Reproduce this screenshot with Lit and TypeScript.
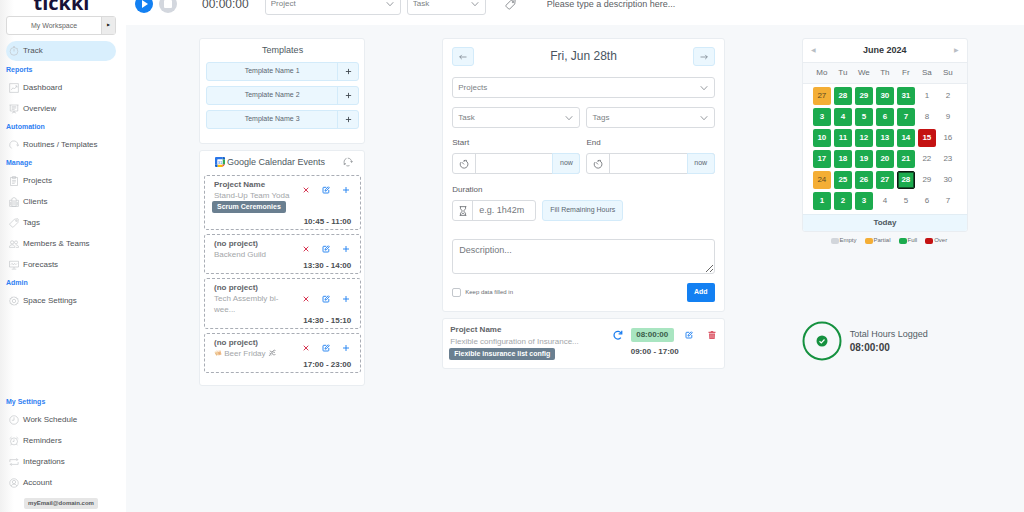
import { LitElement, html, svg, css } from "lit";
import { customElement } from "lit/decorators.js";
import { classMap } from "lit/directives/class-map.js";

/* Line icons on a 16-unit grid, drawn with currentColor. */
const shapes = {
  stopwatch: svg`<circle cx="8" cy="8.6" r="6.2"/><path d="M8 4.8v4M6.4 1.2h3.2M8 1.2v1.2M12.6 3.2l1 1"/>`,
  chart: svg`<path d="M1 1v14h14V1z"/><path d="M3.5 11l3-3.4 2 2 4-4.6M10 4.6h2.8v2.8"/>`,
  board: svg`<path d="M.8 1.6h14.4M2 1.6v9.6h12V1.6M8 11.2v3M4.6 14.8L8 12.4l3.4 2.4M4.4 4.4h7.2M4.4 6.4h7.2M4.4 8.6h4.6"/>`,
  routine: svg`<path d="M4 13.4A6.6 6.6 0 1 1 14.2 9"/><path d="M11.8 7.6l2.4 2.2 1.6-2.8"/>`,
  clipboard: svg`<path d="M2.4 2.4h11.2v12.8H2.4z"/><path d="M5.4.9h5.2v3H5.4zM5 7h6M5 9.4h6M5 11.8h4"/>`,
  building: svg`<path d="M4.6 15V2.6L8 .8l3.4 1.8V15zM4.6 5.2H1V15h14V5.2h-3.6M6.6 5v8M9.4 5v8M2.8 8v5M13.2 8v5"/>`,
  tag: svg`<path d="M8.8 1.8l5.4-.6.6.6-.6 5.4-7.4 7.4a1 1 0 0 1-1.4 0L1.4 10.6a1 1 0 0 1 0-1.4z"/><circle cx="11.6" cy="4.4" r="1.1"/>`,
  people: svg`<circle cx="5" cy="5.4" r="2.6"/><circle cx="11.2" cy="5.4" r="2.4"/><path d="M.6 13.4c0-2.6 1.4-3.8 4.4-4.2 3 .4 4.4 1.6 4.4 4.2zM10.6 9.4c3 0 4.8 1.4 4.8 4H11"/>`,
  forecast: svg`<path d="M.8 2h14.4v9.2H.8zM8 11.2v3M4.4 14.6h7.2"/><path d="M3 7.4l2-2 2 2.6 2-2.6 2 2 2-2"/>`,
  gear: svg`<path d="M8 .9l1.4 1.8 2.1-.9.6 2.2 2.3.3-.5 2.2 1.6 1.6-1.6 1.6.5 2.2-2.3.3-.6 2.2-2.1-.9L8 15.100l-1.400-1.800-2.100.9-.6-2.200-2.300-.3.5-2.200L.5 7.900l1.600-1.600-.5-2.200 2.300-.3.6-2.200 2.100.9z"/><circle cx="8" cy="8" r="2.700"/>`,
  clock: svg`<circle cx="8" cy="8" r="6.800"/><path d="M8 3.600V8.400H4.600"/>`,
  alarm: svg`<circle cx="8" cy="8.600" r="5.600"/><path d="M8 5.400v3.400H5.800M1 4.400L4 1.600M15 4.400l-3-2.800M4 13l-1.400 1.800M12 13l1.400 1.800"/>`,
  repeat: svg`<path d="M1.400 8V4.200h12.400M11.800 2l2.200 2.200-2.200 2.200M14.600 8v3.800H2.200M4.200 9.600L2 11.800 4.200 14"/>`,
  account: svg`<circle cx="8" cy="8" r="6.800"/><circle cx="8" cy="6.400" r="2.600"/><path d="M3.600 13c.4-2 2-3 4.400-3s4 1 4.400 3"/>`,
  cross: svg`<path d="M3.400 3.400l9.200 9.200M12.600 3.400l-9.200 9.200"/>`,
  plus: svg`<path d="M8 2v12M2 8h12"/>`,
  edit: svg`<path d="M8.600 2.600H3.400a1.400 1.400 0 0 0-1.400 1.400v8.600A1.400 1.400 0 0 0 3.400 14h8.800a1.400 1.400 0 0 0 1.400-1.400V8"/><path d="M6 10.200l.5-2.500 6.200-6.200 2 2-6.200 6.200z"/>`,
  left: svg`<path d="M15 8H1.400M5.600 3.800L1.400 8l4.200 4.200"/>`,
  right: svg`<path d="M1 8h13.600M10.400 3.800L14.600 8l-4.200 4.200"/>`,
  down: svg`<path d="M1.500 4.500L8 11.500l6.500-7"/>`,
  timer: svg`<path d="M8 2.200a6.200 6.200 0 1 1-5.200 3M8 2.200v2.600M8 8.600L4.400 5M10.800 1.600l1.800 1"/>`,
  hourglass: svg`<path d="M2.600 1h10.800M2.600 15h10.800M4 1v3.400L7 8l-3 3.600V15M12 1v3.400L9 8l3 3.600V15M5.600 13.200L8 11l2.400 2.200"/>`,
  sync: svg`<path d="M5.600 2.200A6.200 6.200 0 0 0 3 11.800M.8 11.200l2.400.9.9-2.400M7.600 1.800a6.200 6.200 0 0 1 6.200 6.600M10.400 13.700a6.200 6.200 0 0 1-5 .2M15.400 6.600l-1.500 2-2-1.500"/>`,
  redo: svg`<path d="M12.600 12.200A6.200 6.200 0 1 1 13 4.800M14 1v5H9"/>`,
};
type IconName = keyof typeof shapes;
const icon = (name: IconName) =>
  html`<svg class="icon" viewBox="0 0 16 16" aria-hidden="true">${shapes[name]}</svg>`;

type Group = { title?: string; items: [IconName, string][] };
const mainNav: Group[] = [
  { items: [["stopwatch", "Track"]] },
  { title: "Reports", items: [["chart", "Dashboard"], ["board", "Overview"]] },
  { title: "Automation", items: [["routine", "Routines / Templates"]] },
  {
    title: "Manage",
    items: [["clipboard", "Projects"], ["building", "Clients"], ["tag", "Tags"], ["people", "Members & Teams"], ["forecast", "Forecasts"]],
  },
  { title: "Admin", items: [["gear", "Space Settings"]] },
];
const settingsNav: Group[] = [
  {
    title: "My Settings",
    items: [["clock", "Work Schedule"], ["alarm", "Reminders"], ["repeat", "Integrations"], ["account", "Account"]],
  },
];

const beers = html`<svg class="emoji" viewBox="0 0 16 16" aria-hidden="true">
  <path d="M1 6l5-3 4 7-5 4z" fill="#f3cf9d" /><path d="M7 4l6-1 2 8-6 2z" fill="#eeb987" />
  <path d="M2 5l4-3 2 2-5 3zM8 4l5-2 1 2-6 2z" fill="#fbefe0" /><path d="M3 8l2 4M10 7l1 3" stroke="#cf9a68" fill="none" />
</svg>`;
const party = html`<svg class="emoji" viewBox="0 0 16 16" aria-hidden="true">
  <path d="M2 14L12 2M4 3l2 3 4-1M8 8l3 4 4-1M3 8l3 2M12 2l3 1M6 13l2-2M10 6l4 1" fill="none" stroke="#8b8e92" stroke-width="1.500" />
</svg>`;

const events = [
  { project: "Project Name", title: html`Stand-Up Team Yoda`, badge: "Scrum Ceremonies", time: "10:45 - 11:00" },
  { project: "(no project)", title: html`Backend Guild`, badge: "", time: "13:30 - 14:00" },
  { project: "(no project)", title: html`Tech Assembly bi-wee...`, badge: "", time: "14:30 - 15:10" },
  { project: "(no project)", title: html`${beers} Beer Friday ${party}`, badge: "", time: "17:00 - 23:00" },
];

const days = [
  [27, 28, 29, 30, 31, 1, 2],
  [3, 4, 5, 6, 7, 8, 9],
  [10, 11, 12, 13, 14, 15, 16],
  [17, 18, 19, 20, 21, 22, 23],
  [24, 25, 26, 27, 28, 29, 30],
  [1, 2, 3, 4, 5, 6, 7],
];
/* One letter a day: p partial, f full, o over, s full and selected, - none. */
const states = ["pffff--", "fffff--", "fffffo-", "fffff--", "pfffs--", "fff----"];

const base = css`
  *, *::before { box-sizing: border-box; }
  button, input, select, textarea { font: inherit; color: inherit; margin: 0; padding: 0; border: 0; background: none; border-radius: 0; min-width: 0; }
  button, a, select { cursor: pointer; }
  h1, h2, p, ul, label { margin: 0; padding: 0; font-weight: 400; }
  ul { list-style: none; }
  .icon { display: block; width: 10px; height: 10px; fill: none; stroke: currentColor; stroke-width: 1.200; flex: none; }
  .card { background: #fff; border: 1px solid #e9edf1; border-radius: 3px; }
  .pick { display: grid; align-items: center; height: 21px; border: 1px solid #d9dce0; border-radius: 3px; background: #fff; color: #7b7f84; font-size: 8px; }
  .pick select { grid-area: 1 / 1; appearance: none; width: 100%; height: 19px; padding: 0 20px 0 5px; outline: none; }
  .pick .icon { grid-area: 1 / 1; justify-self: end; width: 8px; height: 8px; margin-right: 6px; pointer-events: none; color: #8b8f94; stroke-width: 1.800; }
  .soft { background: #ebf7fe; border: 1px solid #d3ebfa; border-radius: 3px; color: #5a6570; font-size: 7px; }
  .badge { display: inline-block; background: #6a7f90; color: #fff; border-radius: 2px; font-size: 7px; font-weight: 700; line-height: 12px; padding: 0 5px; white-space: nowrap; }
  .project { font-weight: 700; color: #5f6368; }
  .muted { color: #a3a6a9; }
  .act { display: grid; place-items: center; color: #1a7df0; }
  .danger { color: #d3203f; }
`;

@customElement("side-bar")
class SideBar extends LitElement {
  static styles = [base, css`
    :host { display: flex; flex-direction: column; height: 100vh; padding: 0 10px 3px 6px; overflow: hidden; background: linear-gradient(90deg, #f1f1f1, #fff 14px); }
    .logo { font: 700 20px/20px "Open Sans", "Noto Sans", sans-serif; color: #171238; text-align: center; margin: -7px 0 3px 1px; }
    .space { display: flex; height: 19px; border: 1px solid #dadada; border-radius: 3px; background: #fff; font-size: 7px; color: #666; flex: none; }
    .space .name { flex: 1; padding-top: 1px; }
    .space .more { width: 14px; background: #ececec; border-left: 1px solid #dadada; font-size: 4px; color: #222; }
    nav:first-of-type { margin-top: 6px; }
    .title { font-size: 7px; font-weight: 700; line-height: 15px; color: #2f80f2; }
    .item { display: flex; align-items: center; gap: 4px; height: 21px; padding-left: 3px; color: #4f5357; text-decoration: none; border-radius: 10px; }
    .item .icon { color: #bfc2c5; stroke-width: 1; }
    .on { background: #d9effd; height: 20px; margin-bottom: 1px; }
    .foot { margin-top: auto; }
    .mail { align-self: center; margin: 5px 0 0; padding: 0 4px; line-height: 11px; font-size: 6px; font-weight: 700; color: #55585b; background: #e6e6e6; border-radius: 2px; }
  `];
  group(g: Group) {
    return html`${g.title ? html`<h2 class="title">${g.title}</h2>` : ""}
      <ul>${g.items.map(([i, t]) => html`<li><a href="#" class=${classMap({ item: true, on: t === "Track" })}>${icon(i)}<span>${t}</span></a></li>`)}</ul>`;
  }
  render() {
    return html`
      <div class="logo">tickki</div>
      <div class="space"><button class="name">My Workspace</button><button class="more" aria-label="Switch workspace">▶</button></div>
      <nav>${mainNav.map((g) => this.group(g))}</nav>
      <nav class="foot">${settingsNav.map((g) => this.group(g))}</nav>
      <p class="mail">myEmail@domain.com</p>`;
  }
}

@customElement("timer-bar")
class TimerBar extends LitElement {
  static styles = [base, css`
    :host { display: flex; align-items: center; height: 42px; margin-top: -17px; padding: 0 56px 0 9px; background: #fff; }
    .round { display: grid; place-items: center; width: 18px; height: 18px; border-radius: 50%; margin-right: 6px; }
    .play { background: #1380f2; }
    .stop { background: #d3d7de; }
    .round svg { width: 18px; height: 18px; fill: #fff; }
    .time { font-size: 12px; color: #4a4d50; margin: 0 16px 0 19px; }
    .pick { width: 136px; margin-right: 6px; }
    .task { width: 79px; }
    .tags { margin: 0 26px 0 13px; color: #777b80; }
    .tags .icon { width: 11px; height: 11px; }
    .note { flex: 1; font-size: 9px; outline: none; padding: 0 0 0 5px; }
    .note::placeholder { color: #5c6064; opacity: 1; }
  `];
  render() {
    return html`
      <button class="round play" aria-label="Start"><svg viewBox="0 0 18 18"><path d="M7 5l6 4-6 4z" /></svg></button>
      <button class="round stop" aria-label="Stop"><svg viewBox="0 0 18 18"><rect x="5" y="5" width="8" height="8" rx="1" /></svg></button>
      <span class="time">00:00:00</span>
      <div class="pick"><select aria-label="Project"><option>Project</option></select>${icon("down")}</div>
      <div class="pick task"><select aria-label="Task"><option>Task</option></select>${icon("down")}</div>
      <button class="tags" aria-label="Tags">${icon("tag")}</button>
      <input class="note" aria-label="Description" placeholder="Please type a description here..." />`;
  }
}

@customElement("template-list")
class TemplateList extends LitElement {
  static styles = [base, css`
    :host { display: block; }
    .card { padding: 5px 5px 14px 6px; }
    h2 { font-size: 9px; line-height: 12px; color: #4e5861; text-align: center; margin-bottom: 6px; }
    ul { display: grid; gap: 5px; }
    .row { display: flex; height: 19px; }
    .name { flex: 1; }
    .add { display: grid; place-items: center; width: 21px; border-left: 1px solid #d3ebfa; color: #3f474e; }
    .add .icon { width: 7px; height: 7px; stroke-width: 2; }
  `];
  render() {
    return html`<section class="card"><h2>Templates</h2><ul>
      ${[1, 2, 3].map((n) => html`<li class="row soft"><button class="name">Template Name ${n}</button>
        <button class="add" aria-label="Add template ${n}">${icon("plus")}</button></li>`)}
    </ul></section>`;
  }
}

@customElement("event-list")
class EventList extends LitElement {
  static styles = [base, css`
    :host { display: block; }
    .card { padding: 5px 3px 12px 4px; }
    header { display: flex; align-items: center; height: 12px; margin: 0 8px 7px 11px; }
    .gcal { width: 10px; height: 10px; }
    h2 { font-size: 9px; color: #4e5861; margin: 0 auto 0 2px; white-space: nowrap; }
    .sync { color: #8a8e92; }
    ul { display: grid; gap: 4px; }
    .event { display: grid; grid-template-columns: minmax(0, 1fr) auto; align-items: center; column-gap: 8px; padding: 3px 9px 2px; border: 1px dashed #a9adb5; border-radius: 3px; line-height: 11px; }
    .acts { display: flex; gap: 10px; }
    .act { width: 10px; }
    .act .icon { width: 8px; height: 8px; stroke-width: 1.800; }
    .badge { justify-self: start; margin: 0 0 3px -2px; }
    .when { grid-column: 1 / -1; text-align: right; font-weight: 700; color: #4b4e52; }
    .emoji { width: 8px; height: 8px; vertical-align: -1px; }
  `];
  render() {
    return html`<section class="card">
      <header>
        <svg class="gcal" viewBox="0 0 20 20" aria-hidden="true">
          <path d="M0 2a2 2 0 0 1 2-2h13v5H5v10H0z" fill="#2a76e8" /><path d="M15 0h3a2 2 0 0 1 2 2v3h-5z" fill="#1560c8" />
          <path d="M15 5h5v10h-5z" fill="#34a853" /><path d="M5 15h10v5H5z" fill="#fbbc04" />
          <path d="M0 15h5v5H2a2 2 0 0 1-2-2z" fill="#1560c8" /><path d="M15 15h5l-5 5z" fill="#ea4335" />
          <path d="M5 5h10v10H5z" fill="#fff" /><text x="10" y="13" font-size="8" text-anchor="middle" fill="#1a73e8">31</text>
        </svg>
        <h2>Google Calendar Events</h2>
        <button class="sync" aria-label="Sync">${icon("sync")}</button>
      </header>
      <ul>${events.map((e) => html`<li class="event">
        <div><div class="project">${e.project}</div><div class="muted">${e.title}</div></div>
        <div class="acts"><button class="act danger" aria-label="Dismiss">${icon("cross")}</button>
          <button class="act" aria-label="Edit">${icon("edit")}</button><button class="act" aria-label="Add">${icon("plus")}</button></div>
        ${e.badge ? html`<span class="badge">${e.badge}</span>` : ""}
        <div class="when">${e.time}</div></li>`)}</ul>
    </section>`;
  }
}

@customElement("entry-form")
class EntryForm extends LitElement {
  static styles = [base, css`
    :host { display: block; }
    .card { padding: 8px 9px 9px; }
    .day { display: flex; align-items: center; justify-content: space-between; height: 19px; margin-bottom: 11px; }
    .day .soft { display: grid; place-items: center; width: 22px; height: 19px; }
    .day .icon { width: 8px; height: 8px; }
    h1 { font-size: 12px; color: #4a5560; }
    .two { display: grid; grid-template-columns: repeat(2, minmax(0, 1fr)); gap: 6px; margin-top: 9px; }
    .name { display: block; line-height: 11px; margin-bottom: 5px; color: #5c6065; }
    .group { display: flex; height: 21px; border: 1px solid #d9dce0; border-radius: 3px; }
    .lead { display: grid; place-items: center; flex: none; width: 23px; border-right: 1px solid #d9dce0; color: #5a5e63; }
    .group input { flex: 1; width: 0; outline: none; padding: 0 6px; font-size: 9px; }
    .now { flex: none; width: 28px; margin: -1px; border-radius: 0 3px 3px 0; }
    .duration { margin-top: 10px; }
    .line { display: flex; gap: 6px; }
    .line .group { width: 84px; }
    .line .lead { width: 20px; }
    .line .soft { padding: 0 7px; }
    ::placeholder { color: #74787d; opacity: 1; }
    textarea { display: block; width: 100%; height: 35px; margin: 18px 0 9px; padding: 4px 6px; border: 1px solid #d9dce0; border-radius: 3px; font-size: 9px; line-height: 12px; resize: vertical; outline: none; }
    .end { display: flex; align-items: center; justify-content: space-between; }
    .keep { display: flex; align-items: center; gap: 4px; font-size: 6px; color: #6a6e73; }
    .keep input { appearance: none; width: 9px; height: 9px; border: 1px solid #c3c7cc; border-radius: 2px; }
    .save { width: 28px; height: 19px; border-radius: 2px; background: #1380f2; color: #fff; font-size: 7px; font-weight: 700; }
  `];
  time(id: string, text: string) {
    return html`<div><label class="name" for=${id}>${text}</label>
      <div class="group"><span class="lead">${icon("timer")}</span><input id=${id} /><button class="soft now" type="button">now</button></div></div>`;
  }
  pick(text: string) {
    return html`<div class="pick"><select aria-label=${text}><option>${text}</option></select>${icon("down")}</div>`;
  }
  render() {
    return html`<form class="card">
      <div class="day"><button class="soft" type="button" aria-label="Previous day">${icon("left")}</button>
        <h1>Fri, Jun 28th</h1><button class="soft" type="button" aria-label="Next day">${icon("right")}</button></div>
      ${this.pick("Projects")}
      <div class="two">${this.pick("Task")}${this.pick("Tags")}</div>
      <div class="two">${this.time("start", "Start")}${this.time("end", "End")}</div>
      <div class="duration"><label class="name" for="duration">Duration</label>
        <div class="line"><div class="group"><span class="lead">${icon("hourglass")}</span><input id="duration" placeholder="e.g. 1h42m" /></div>
          <button class="soft" type="button">Fill Remaining Hours</button></div></div>
      <textarea aria-label="Description" placeholder="Description..."></textarea>
      <div class="end"><label class="keep"><input type="checkbox" />Keep data filled in</label><button class="save" type="button">Add</button></div>
    </form>`;
  }
}

@customElement("logged-entry")
class LoggedEntry extends LitElement {
  static styles = [base, css`
    :host { display: block; }
    .card { display: flex; padding: 5px 7px 8px; line-height: 12px; }
    .what { flex: 1; min-width: 0; }
    .badge { margin-left: -1px; }
    .redo { height: 12px; margin: 5px 8px 0 0; }
    .redo .icon { stroke-width: 2; }
    .log { width: 51px; margin: 4px 3px 0 0; font-weight: 700; color: #4b4e52; white-space: nowrap; }
    .total { display: block; width: 43px; line-height: 14px; text-align: center; border-radius: 2px; background: #a9e5c1; color: #3b5c49; margin-bottom: 4px; }
    .edit, .bin { height: 12px; margin-top: 5px; }
    .edit .icon { width: 8px; height: 8px; stroke-width: 1.800; }
    .bin { width: 10px; margin-left: 14px; }
    .bin svg { width: 8px; height: 8px; fill: #dc5a6a; }
  `];
  render() {
    return html`<article class="card">
      <div class="what"><div class="project">Project Name</div><div class="muted">Flexible configuration of Insurance...</div>
        <span class="badge">Flexible insurance list config</span></div>
      <button class="act redo" aria-label="Repeat">${icon("redo")}</button>
      <div class="log"><span class="total">08:00:00</span>09:00 - 17:00</div>
      <button class="act edit" aria-label="Edit">${icon("edit")}</button>
      <button class="act bin" aria-label="Delete"><svg viewBox="0 0 16 16"><path d="M6 0h4l1 1.500h4v2.500H1V1.500h4zM2 5h12l-.6 11H2.600z" /><path d="M5.500 7v7M8 7v7M10.500 7v7" stroke="#f3b6bd" /></svg></button>
    </article>`;
  }
}

@customElement("month-calendar")
class MonthCalendar extends LitElement {
  static styles = [base, css`
    :host { display: block; }
    .card { overflow: hidden; }
    header { display: flex; align-items: center; justify-content: space-between; height: 23px; padding: 0 8px; }
    h2 { font-size: 9px; font-weight: 700; color: #33373b; }
    .step { font-size: 6px; color: #b9bec4; }
    table, thead, tbody { display: block; }
    tr { display: grid; grid-template-columns: repeat(7, 18px); justify-content: center; gap: 3px; }
    thead { background: #f7f9fb; border: solid #e9edf1; border-width: 1px 0; }
    th { padding: 0; font-weight: 400; line-height: 20px; color: #6a6e73; text-align: center; }
    tbody { padding: 3px 0 4px; }
    tbody tr + tr { margin-top: 3px; }
    td { padding: 0; }
    .d { width: 18px; height: 18px; border-radius: 2px; color: #74787c; }
    .full, .over { color: #fff; font-weight: 700; }
    .full { background: #1cab4e; }
    .over { background: #c41212; }
    .partial { background: #f4ae35; color: #5d4a22; }
    .empty { background: #d2d6db; }
    .sel { border: 1px solid #0c1a10; box-shadow: inset 0 0 0 1px #12552a; }
    .today { display: block; width: 100%; height: 17px; background: #ebf7fe; border-top: 1px solid #e2edf4; font-weight: 700; color: #4e5861; }
    .key { display: flex; justify-content: center; gap: 8px; margin-top: 4px; padding-left: 8px; font-size: 6px; line-height: 9px; color: #6a6e73; }
    .key li { display: flex; align-items: center; gap: 1px; }
    .dot { width: 8px; height: 6px; border-radius: 2px; }
  `];
  render() {
    return html`<section class="card">
        <header><button class="step" aria-label="Previous month">◀</button><h2>June 2024</h2><button class="step" aria-label="Next month">▶</button></header>
        <table>
          <thead><tr>${["Mo", "Tu", "We", "Th", "Fr", "Sa", "Su"].map((d) => html`<th scope="col">${d}</th>`)}</tr></thead>
          <tbody>${days.map((week, w) => html`<tr>${week.map((d, i) => {
            const s = states[w][i];
            return html`<td><button class=${classMap({ d: true, full: s === "f" || s === "s", partial: s === "p", over: s === "o", sel: s === "s" })}>${d}</button></td>`;
          })}</tr>`)}</tbody>
        </table>
        <button class="today">Today</button>
      </section>
      <ul class="key">${["Empty", "Partial", "Full", "Over"].map((k) => html`<li><span class="dot ${k.toLowerCase()}"></span>${k}</li>`)}</ul>`;
  }
}

@customElement("hours-total")
class HoursTotal extends LitElement {
  static styles = [base, css`
    :host { display: flex; align-items: center; gap: 8px; }
    .ring { width: 40px; height: 40px; flex: none; }
    .text { font-size: 9px; line-height: 13px; color: #525c64; }
    .sum { font-size: 10px; font-weight: 700; color: #3c4043; }
  `];
  render() {
    return html`<svg class="ring" viewBox="0 0 40 40" aria-hidden="true">
        <circle cx="20" cy="20" r="18.500" fill="none" stroke="#15913f" stroke-width="2" /><circle cx="20" cy="20" r="5.500" fill="#15913f" />
        <path d="M17.500 20.200l1.800 1.700 3.200-3.400" fill="none" stroke="#fff" stroke-width="1.200" /></svg>
      <div class="text">Total Hours Logged<div class="sum">08:00:00</div></div>`;
  }
}

@customElement("app-root")
class AppRoot extends LitElement {
  static styles = [base, css`
    :host { display: grid; grid-template-columns: 126px minmax(0, 1fr); height: 100vh; overflow: hidden; background: #f6f8fa; font: 8px/1.2 "Liberation Sans", Arial, sans-serif; color: #4f5357; }
    main { overflow: hidden; }
    .cols { display: grid; grid-template-columns: 166fr 282fr 166fr; gap: 77px; align-items: start; padding: 13px 56px 13px 73px; }
    .col { display: grid; grid-template-columns: minmax(0, 1fr); gap: 6px; min-width: 0; }
    .side { gap: 76px; }
  `];
  render() {
    return html`<side-bar></side-bar>
      <main><timer-bar></timer-bar>
        <div class="cols">
          <div class="col"><template-list></template-list><event-list></event-list></div>
          <div class="col"><entry-form></entry-form><logged-entry></logged-entry></div>
          <div class="col side"><month-calendar></month-calendar><hours-total></hours-total></div>
        </div>
      </main>`;
  }
}
